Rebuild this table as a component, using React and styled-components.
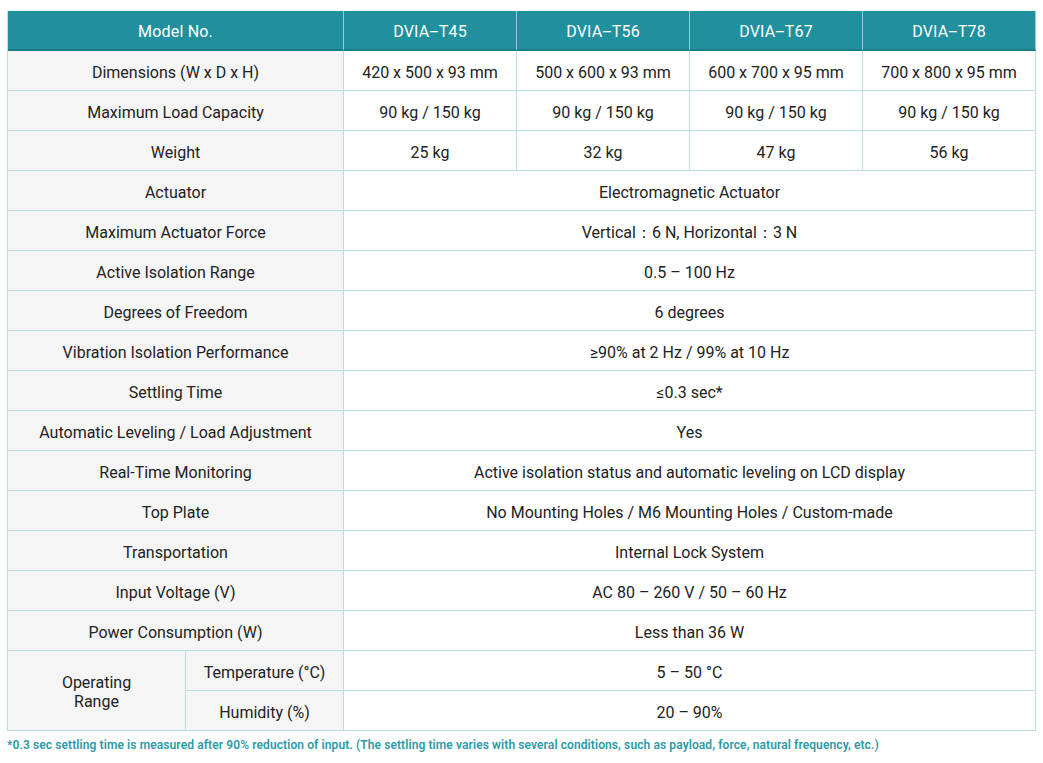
import React from "react";
import styled, { createGlobalStyle } from "styled-components";

const Global = createGlobalStyle`
  html, body { margin: 0; padding: 0; background: #fff; }
  body { font-family: Roboto, "Noto Sans", sans-serif; }
`;

const Page = styled.div`
  padding: 11px 0 0 7px;
  width: 1043px;
  box-sizing: border-box;
`;

const Grid = styled.div`
  display: grid;
  grid-template-columns: 178px 158px repeat(4, 173px);
  grid-auto-rows: 40px;
  border-left: 1px solid #b9dfe4;
  width: 1028px;
`;

const Cell = styled.div`
  display: flex;
  align-items: center;
  justify-content: center;
  text-align: center;
  box-sizing: border-box;
  padding-top: 3px;
  font-size: 16px;
  color: #222;
  line-height: 19px;
  border-right: 1px solid #b9dfe4;
  border-bottom: 1px solid #b9dfe4;
  background: ${(p) => (p.$label ? "#f5f5f5" : "#fff")};
  grid-column: ${(p) => p.$col || "auto"};
  grid-row: ${(p) => p.$row || "auto"};
`;

const HeadCell = styled(Cell)`
  background: #21909e;
  color: #fff;
  border-right: 1px solid #8fcdd5;
  border-bottom: 2px solid #1a7a86;
  letter-spacing: 0.2px;
`;

const Note = styled.div`
  margin-top: 7px;
  font-size: 12px;
  font-weight: 600;
  color: #2b9aa7;
  letter-spacing: 0.1px;
`;

const models = ["DVIA‒T45", "DVIA‒T56", "DVIA‒T67", "DVIA‒T78"];

const perModel = [
  ["Dimensions (W x D x H)", ["420 x 500 x 93 mm", "500 x 600 x 93 mm", "600 x 700 x 95 mm", "700 x 800 x 95 mm"]],
  ["Maximum Load Capacity", ["90 kg / 150 kg", "90 kg / 150 kg", "90 kg / 150 kg", "90 kg / 150 kg"]],
  ["Weight", ["25 kg", "32 kg", "47 kg", "56 kg"]],
];

const shared = [
  ["Actuator", "Electromagnetic Actuator"],
  ["Maximum Actuator Force", "Vertical：6 N, Horizontal：3 N"],
  ["Active Isolation Range", "0.5 – 100 Hz"],
  ["Degrees of Freedom", "6 degrees"],
  ["Vibration Isolation Performance", "≥90% at 2 Hz  / 99% at 10 Hz"],
  ["Settling Time", "≤0.3 sec*"],
  ["Automatic Leveling / Load Adjustment", "Yes"],
  ["Real-Time Monitoring", "Active isolation status and automatic leveling on LCD display"],
  ["Top Plate", "No Mounting Holes / M6 Mounting Holes / Custom-made"],
  ["Transportation", "Internal Lock System"],
  ["Input Voltage (V)", "AC 80 – 260 V / 50 – 60 Hz"],
  ["Power Consumption (W)", "Less than 36 W"],
];

export default function App() {
  return (
    <Page>
      <Global />
      <Grid>
        <HeadCell $col="1 / 3">Model No.</HeadCell>
        {models.map((m) => (
          <HeadCell key={m}>{m}</HeadCell>
        ))}
        {perModel.map(([label, vals]) => (
          <React.Fragment key={label}>
            <Cell $label $col="1 / 3">{label}</Cell>
            {vals.map((v, i) => (
              <Cell key={i}>{v}</Cell>
            ))}
          </React.Fragment>
        ))}
        {shared.map(([label, val]) => (
          <React.Fragment key={label}>
            <Cell $label $col="1 / 3">{label}</Cell>
            <Cell $col="3 / 7">{val}</Cell>
          </React.Fragment>
        ))}
        <Cell $label $col="1 / 2" $row="span 2">Operating<br />Range</Cell>
        <Cell $label $col="2 / 3">Temperature (°C)</Cell>
        <Cell $col="3 / 7">5 – 50 °C</Cell>
        <Cell $label $col="2 / 3">Humidity (%)</Cell>
        <Cell $col="3 / 7">20 – 90%</Cell>
      </Grid>
      <Note>
        *0.3 sec settling time is measured after 90% reduction of input. (The settling time varies with several conditions, such as payload, force, natural frequency, etc.)
      </Note>
    </Page>
  );
}
